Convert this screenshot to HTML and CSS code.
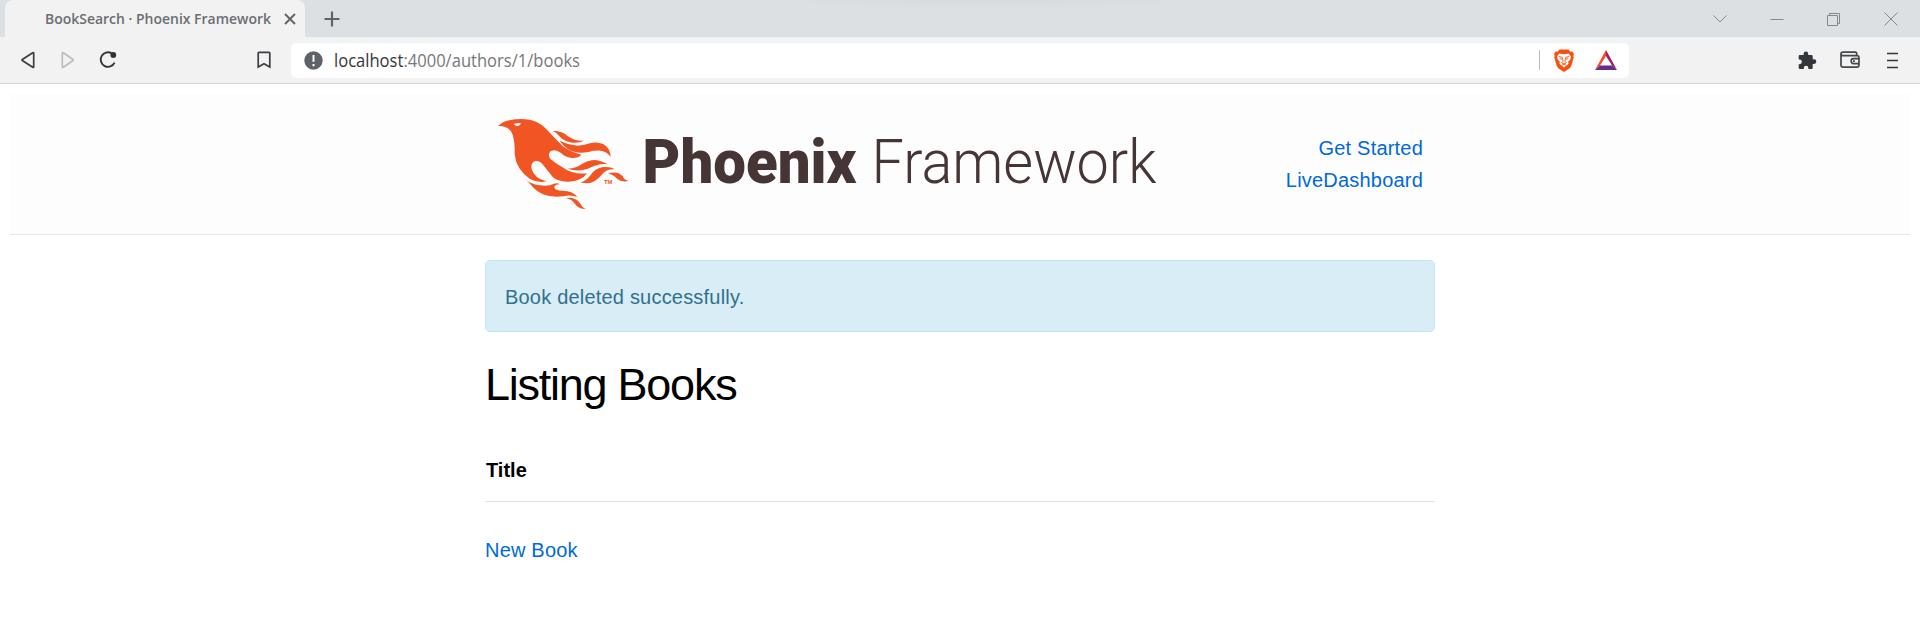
FILE: index.html
```html
<!DOCTYPE html>
<html lang="en">
<head>
<meta charset="utf-8">
<title>BookSearch · Phoenix Framework</title>
<link rel="stylesheet" href="styles.css">
</head>
<body>
<div class="tabstrip">
  <div class="tab">
    <svg class="tab-title" width="228" height="24"><text x="0" y="17" textLength="226" lengthAdjust="spacingAndGlyphs">BookSearch · Phoenix Framework</text></svg>
    <svg class="tab-close" width="12" height="12" viewBox="0 0 12 12"><path d="M1 1L11 11M11 1L1 11" stroke="#5f6368" stroke-width="1.9"/></svg>
  </div>
  <svg class="new-tab" width="16" height="16" viewBox="0 0 16 16"><path d="M8 .5V15.5M.5 8H15.5" stroke="#5f6368" stroke-width="2.2"/></svg>
  <div class="window-controls">
    <svg width="14" height="14" viewBox="0 0 14 14"><path d="M.5 3.5L7 10L13.5 3.5"/></svg>
    <svg width="14" height="14" viewBox="0 0 14 14"><path d="M.5 7.5H13.5"/></svg>
    <svg width="14" height="14" viewBox="0 0 14 14"><path d="M.5 3.5H10.5V13.5H.5ZM2.5 3.5V1.5H12.5V11.5H10.5"/></svg>
    <svg width="14" height="14" viewBox="0 0 14 14"><path d="M.5 .5L13.5 13.5M13.5 .5L.5 13.5"/></svg>
  </div>
</div>
<div class="toolbar">
  <div class="nav-icons">
    <svg width="14" height="18" viewBox="0 0 14 18"><path d="M12.7 2.2V15.8Q12.7 17 11.7 16.2L1.3 9.5Q.6 9 1.3 8.5L11.7 1.8Q12.7 1 12.7 2.2Z" fill="none" stroke="#3b3e43" stroke-width="1.7"/></svg>
    <svg width="14" height="18" viewBox="0 0 14 18"><path d="M1.3 2.2V15.8Q1.3 17 2.3 16.2L12 9.5Q12.7 9 12 8.5L2.3 1.8Q1.3 1 1.3 2.2Z" fill="none" stroke="#bdbdbd" stroke-width="1.7"/></svg>
    <svg width="18" height="18" viewBox="0 0 18 18"><path d="M12.5 2.1A7.3 7.3 0 1 0 15.6 11.7" fill="none" stroke="#303338" stroke-width="1.9"/><circle cx="14.3" cy="4" r="2.9" fill="#303338"/></svg>
  </div>
  <svg class="bookmark" width="14" height="18" viewBox="0 0 14 18"><path d="M2 1.3H12Q12.8 1.3 12.8 2V16L7 12.7L1.2 16V2Q1.2 1.3 2 1.3Z" fill="none" stroke="#3b3e43" stroke-width="1.7"/></svg>
  <div class="address">
    <svg class="info" width="19" height="19" viewBox="0 0 19 19"><circle cx="9.5" cy="9.5" r="9.2" fill="#5f6368"/><path d="M9.5 4V10.8M9.5 13V15.2" stroke="#fff" stroke-width="2"/></svg>
    <svg class="url" width="250" height="30"><text x="0" y="21.5" textLength="246" lengthAdjust="spacingAndGlyphs"><tspan class="host">localhost</tspan>:4000/authors/1/books</text></svg>
    <span class="divider"></span>
    <svg class="brave" width="20" height="23" viewBox="0 0 20 23"><path d="M5.5 .5H14.5L16.5 2.7L18.3 2.4L20 5L19.4 7L19.7 8.5L17.3 16.8Q16.8 18.5 15.3 19.5L10 23L4.7 19.5Q3.2 18.5 2.7 16.8L.3 8.5L.6 7L0 5L1.7 2.4L3.5 2.7Z" fill="#fb4f0b"/><path d="M5.4 4.5L8 5H12L14.6 4.5L17 7.3L16.5 10L14.2 12.7L14.5 14.7L12.8 16.2L10 18.6L7.2 16.2L5.5 14.7L5.8 12.7L3.5 10L3 7.3Z" fill="#fff"/><path d="M4.8 7.4L8.4 8.4L9 12.3L7.6 13.8L10 14.9L12.4 13.8L11 12.3L11.6 8.4L15.2 7.4M5.7 9.7L8 10.1M14.3 9.7L12 10.1M7.8 16.2L10 15.1L12.2 16.2" fill="none" stroke="#fb4f0b" stroke-width=".9"/></svg>
    <svg class="bat" width="22" height="20" viewBox="0 0 22 20"><path d="M11 0V6L5 15.5L0 20Z" fill="#ff4724"/><path d="M11 0L22 20L17 15.5L11 6Z" fill="#9e1f63"/><path d="M0 20L5 15.5H17L22 20Z" fill="#662d91"/></svg>
  </div>
  <div class="actions">
    <svg width="19" height="19" viewBox="0 0 19 19"><path d="M1.8 4H5.6V2.7A2.3 2.3 0 0 1 10.2 2.7V4H13.4Q14.7 4 14.7 5.3V8.3H16A2.3 2.3 0 0 1 16 12.9H14.7V16.7Q14.7 18 13.4 18H10.4V17A2.3 2.3 0 0 0 5.8 17V18H2Q.7 18 .7 16.7V13.2H1.5A2.4 2.4 0 0 0 1.5 8.4H.7V5.2Q.7 4 1.8 4Z" fill="#33373c"/></svg>
    <svg width="20" height="18" viewBox="0 0 20 18"><path d="M16.7 5V2.5Q16.7 1.2 15.4 1.2H3Q1 1.2 1 3V14Q1 16.2 3.2 16.2H16.8Q19 16.2 19 14V6.5Q19 4.8 17.2 4.6H3Q1.2 4.6 1 3M19 7.6H13.6A2.5 2.5 0 0 0 13.6 12.6H19M13 10.1H14.8" fill="none" stroke="#44474b" stroke-width="1.7"/></svg>
    <svg width="11" height="17" viewBox="0 0 11 17"><path d="M0 1.5H11M0 8.5H11M0 15.5H11" stroke="#33373c" stroke-width="1.7"/></svg>
  </div>
</div>
<header class="site-header">
  <div class="container header-row">
    <svg class="logo" width="664" height="98" viewBox="497 115 664 98">
      <g transform="translate(480 100) scale(.33333)" fill="#f15524">
        <path d="M54 78Q68 65 88 61Q121 53 152 60Q177 66 195 83L233 123Q257 153 304 164Q296 174 279 174Q261 176 240 157Q221 145 210 155Q202 166 212 178Q228 191 246 201Q279 225 321 220Q305 244 265 245Q237 246 219 232L189 194Q179 181 166 183Q151 187 155 207Q163 235 199 244Q174 251 149 236Q109 209 104 163Q105 126 98 104Q91 85 73 80Q64 77 54 78Z"/>
        <path d="M101 72Q111 68 122 69Q122 77 112 78Q105 78 101 72Z" fill="#fdfdfd"/>
        <path d="M218 93Q241 91 258 104Q281 124 312 122Q299 130 277 128Q249 123 237 107Q230 98 218 93Z"/>
        <path d="M238 121Q262 136 295 137Q314 135 330 130Q352 124 371 133Q391 146 392 171Q382 155 362 152Q344 151 325 156Q290 163 264 148Q249 138 238 121Z"/>
        <path d="M263 206Q289 204 307 191Q340 172 367 185Q376 189 384 193Q365 190 342 198Q325 207 308 210Q287 214 263 206Z"/>
        <path d="M301 247Q319 243 332 225Q346 204 369 201Q391 199 405 208Q380 206 365 224Q345 249 321 250Q310 250 301 247Z"/>
        <path d="M384 221Q401 214 416 220Q428 226 431 235Q438 241 446 243Q423 247 412 237Q401 223 384 221Z"/>
        <path d="M133 237Q151 252 179 256Q207 260 222 251Q232 247 239 253Q222 254 223 263Q226 271 247 272Q281 273 292 291Q270 283 251 289Q213 293 189 283Q170 275 159 262Q146 244 133 237Z"/>
        <path d="M258 294Q281 290 295 304Q303 313 307 320Q313 325 318 327Q300 328 287 315Q278 299 258 294Z"/>
        <text class="tm" x="372" y="251" textLength="25" lengthAdjust="spacingAndGlyphs">TM</text>
      </g>
      <text class="word-bold" x="642.5" y="182.6" textLength="214" lengthAdjust="spacingAndGlyphs">Phoenix</text>
      <text class="word-light" x="871.5" y="182.6" textLength="285" lengthAdjust="spacingAndGlyphs">Framework</text>
    </svg>
    <nav class="links"><a>Get Started</a><a>LiveDashboard</a></nav>
  </div>
</header>
<main class="container">
  <p class="alert">Book deleted successfully.</p>
  <h1>Listing Books</h1>
  <table class="books"><thead><tr><th>Title</th></tr></thead></table>
  <a class="new-book">New Book</a>
</main>
</body>
</html>
```
FILE: styles.css
```css
* { box-sizing: border-box; }
body { margin: 0; background: #fff; color: #000; font: 300 20px/32px "Liberation Sans", Arial, sans-serif; letter-spacing: .2px; height: 640px; overflow: hidden; }
svg { display: block; flex: none; overflow: visible; }
.tabstrip { height: 37px; display: flex; align-items: center; background: radial-gradient(ellipse 210px 9px at 985px 0, #d6dadd, #dce0e3); }
.tab { width: 300px; height: 37px; margin-left: 5px; padding-left: 40px; display: flex; align-items: center; background: #f2f2f2; border-radius: 8px 8px 0 0; }
.tab-title { font: 600 15px "Open Sans", sans-serif; letter-spacing: 0; fill: #6a6e73; }
.tab-close { margin-left: 11px; }
.new-tab { margin-left: 19px; }
.window-controls { margin-left: auto; margin-right: 22px; display: flex; gap: 43px; }
.window-controls path { fill: none; stroke: #85888b; stroke-width: 1; }
.toolbar { height: 47px; display: flex; align-items: center; background: #f2f2f2; border-bottom: 1px solid #d3d3d3; }
.nav-icons { display: flex; align-items: center; gap: 25px; margin-left: 21px; width: 235px; }
.nav-icons svg:nth-child(2) { margin: 0 -1px 0 1px; }
.bookmark { margin-left: 1px; }
.address { width: 1338px; height: 35px; margin-left: 20px; padding-left: 13px; display: flex; align-items: center; background: #fff; border-radius: 5px; }
.url { margin-left: 11px; margin-top: -1px; font: 400 18px "Open Sans", sans-serif; letter-spacing: 0; fill: #75787c; }
.host { fill: #34373a; }
.divider { width: 1px; height: 20px; margin-left: 955px; background: #b9bcbf; }
.brave { margin-left: 14px; }
.bat { margin-left: 21px; }
.actions { display: flex; align-items: center; gap: 23px; margin-left: 169px; }
.actions svg:last-child { margin-left: 4px; }
.container { width: 950px; margin: 0 auto; }
.site-header { height: 141px; margin: 10px 10px 25px; background: #fdfdfd; border-bottom: 1px solid #e8e8e8; }
.header-row { display: flex; justify-content: space-between; padding: 21px 12px 0; }
.links { display: flex; flex-direction: column; align-items: flex-end; padding-top: 17px; }
.tm { font: 700 18px "Liberation Sans", sans-serif; letter-spacing: 0; }
.word-bold { font: 900 61px Roboto, sans-serif; letter-spacing: 0; fill: #463535; }
.word-light { font: 300 61px Roboto, sans-serif; letter-spacing: 0; fill: #463535; }
a { color: #0069d9; }
.alert { margin: 0; height: 72px; padding: 20px 19px; line-height: 32px; color: #31708f; background: #d9edf7; border: 1px solid #bce8f1; border-radius: 5px; }
h1 { margin: 26px 0 27px; font-size: 45px; font-weight: 300; line-height: 54px; letter-spacing: -1.25px; }
.books { width: 100%; border-collapse: collapse; margin-bottom: 32px; }
th { padding: 15px 0 15px 1px; text-align: left; font-weight: 700; border-bottom: 1px solid #e1e1e1; letter-spacing: 0; }
.new-book { display: block; }
```
